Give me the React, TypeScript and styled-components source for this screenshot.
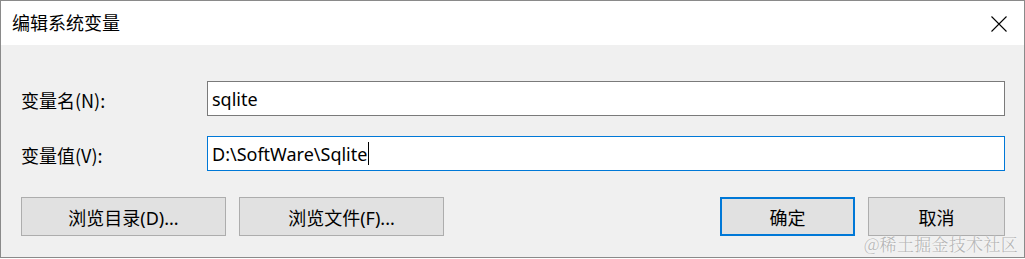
import styled, { createGlobalStyle, css } from "styled-components";

const GlobalStyle = createGlobalStyle`
  html, body {
    margin: 0;
    padding: 0;
    background: #ffffff;
  }
  body {
    font-family: "Noto Sans", "Noto Sans CJK SC", sans-serif;
  }
`;

const Window = styled.div`
  position: relative;
  box-sizing: border-box;
  width: 1025px;
  height: 258px;
  border: 1px solid #8a8a8a;
  background: #f0f0f0;
  display: flex;
  flex-direction: column;
  overflow: hidden;
`;

const TitleBar = styled.div`
  height: 44px;
  flex: none;
  background: #ffffff;
  display: flex;
  align-items: center;
  justify-content: space-between;
  padding: 0 10px 0 11px;
`;

const Title = styled.div`
  font-family: "Noto Sans CJK SC", sans-serif;
  font-size: 18px;
  color: #000;
  line-height: 1;
  margin-top: -2px;
`;

const CloseButton = styled.div`
  width: 30px;
  height: 30px;
  display: flex;
  align-items: center;
  justify-content: center;
  margin-top: 1px;
`;

const Body = styled.div`
  flex: 1;
  padding: 36px 19px 0 20px;
  display: flex;
  flex-direction: column;
`;

const Fields = styled.div`
  display: grid;
  grid-template-columns: 186px 1fr;
  row-gap: 20px;
  align-items: center;
`;

const Label = styled.div`
  font-family: "Noto Sans CJK SC", sans-serif;
  font-size: 18px;
  color: #000;
  line-height: 1;
  margin-top: 2px;
`;

const Input = styled.div<{ $focused?: boolean }>`
  box-sizing: border-box;
  height: 35px;
  background: #ffffff;
  border: 1px solid ${(p) => (p.$focused ? "#0078d7" : "#7a7a7a")};
  padding: 0 4px;
  display: flex;
  align-items: center;
  font-family: "Noto Sans", "Noto Sans CJK SC", sans-serif;
  font-size: 18px;
  color: #000;
`;

const Caret = styled.span`
  display: inline-block;
  width: 1px;
  height: 23px;
  background: #000;
  margin-left: 1px;
`;

const Buttons = styled.div`
  display: flex;
  justify-content: space-between;
  margin-top: 26px;
`;

const Group = styled.div`
  display: flex;
  gap: 13px;
`;

const Button = styled.div<{ $w: number; $default?: boolean }>`
  box-sizing: border-box;
  width: ${(p) => p.$w}px;
  height: 39px;
  background: #e1e1e1;
  border: 1px solid #adadad;
  display: flex;
  align-items: center;
  justify-content: center;
  font-family: "Noto Sans", "Noto Sans CJK SC", sans-serif;
  font-size: 18px;
  color: #000;
  ${(p) =>
    p.$default &&
    css`
      border: 2px solid #0078d7;
    `}
`;

const Watermark = styled.div`
  position: absolute;
  right: 6px;
  bottom: 1px;
  font-family: "Noto Serif CJK SC", "Noto Sans CJK SC", serif;
  font-size: 17px;
  font-weight: 300;
  color: #b4b4b4;
  letter-spacing: 0.3px;
  text-shadow: 0 0 2px #ffffff;
`;

export default function App() {
  return (
    <>
      <GlobalStyle />
      <Window>
        <TitleBar>
          <Title>编辑系统变量</Title>
          <CloseButton>
            <svg width="16" height="16" viewBox="0 0 16 16">
              <path d="M0.5 0.5L15.5 15.5M15.5 0.5L0.5 15.5" stroke="#000" strokeWidth="1.1" />
            </svg>
          </CloseButton>
        </TitleBar>
        <Body>
          <Fields>
            <Label>变量名(N):</Label>
            <Input>sqlite</Input>
            <Label>变量值(V):</Label>
            <Input $focused>
              D:\SoftWare\Sqlite
              <Caret />
            </Input>
          </Fields>
          <Buttons>
            <Group>
              <Button $w={205}>浏览目录(D)...</Button>
              <Button $w={205}>浏览文件(F)...</Button>
            </Group>
            <Group>
              <Button $w={135} $default>
                确定
              </Button>
              <Button $w={137}>取消</Button>
            </Group>
          </Buttons>
        </Body>
        <Watermark>@稀土掘金技术社区</Watermark>
      </Window>
    </>
  );
}
